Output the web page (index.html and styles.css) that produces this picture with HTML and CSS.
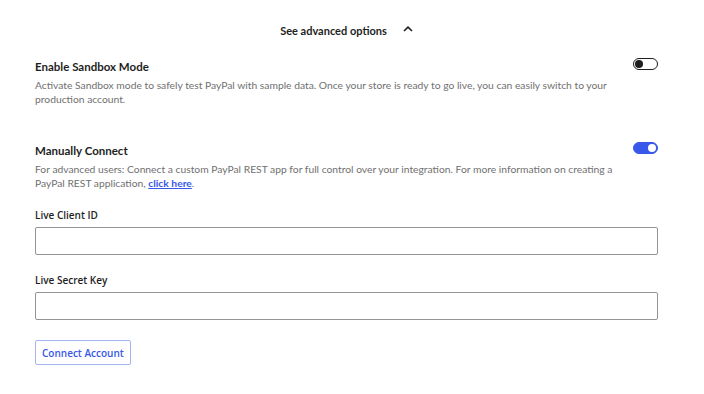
FILE: index.html
```html
<!DOCTYPE html>
<html lang="en">
<head>
    <meta charset="UTF-8">
    <meta name="viewport" content="width=device-width, initial-scale=1.0">
    <title>PayPal Advanced Options</title>
    <link rel="stylesheet" href="styles.css">
</head>
<body>
    <div class="panel">
        <div class="advanced-toggle">
            <span>See advanced options</span>
            <svg class="chevron" width="10" height="6" viewBox="0 0 10 6">
                <path d="M1 5 L5 1.2 L9 5" fill="none" stroke="#1e1e1e" stroke-width="1.6"/>
            </svg>
        </div>

        <div class="option">
            <div class="option-text">
                <h3>Enable Sandbox Mode</h3>
                <p>Activate Sandbox mode to safely test PayPal with sample data. Once your store is ready to go live, you can easily switch to your production account.</p>
            </div>
            <span class="switch"></span>
        </div>

        <div class="option manual">
            <div class="option-text">
                <h3>Manually Connect</h3>
                <p>For advanced users: Connect a custom PayPal REST app for full control over your integration. For more information on creating a PayPal REST application, <a href="#">click here</a>.</p>
            </div>
            <span class="switch on"></span>
        </div>

        <label class="field">
            <span>Live Client ID</span>
            <input type="text">
        </label>

        <label class="field">
            <span>Live Secret Key</span>
            <input type="password">
        </label>

        <button class="connect">Connect Account</button>
    </div>
</body>
</html>
```

FILE: styles.css
```css
body {
    margin: 0;
    background: #fff;
    color: #1e1e1e;
    font-family: 'Lato', sans-serif;
}

.panel {
    padding: 20px 46px 0 35px;
}

.advanced-toggle {
    display: flex;
    justify-content: center;
    align-items: center;
    gap: 16px;
    font-size: 11px;
    font-weight: bold;
    height: 20px;
}

.chevron {
    margin-top: -2px;
}

.option {
    display: flex;
    justify-content: space-between;
    align-items: flex-start;
    margin-top: 20px;
}

.option.manual {
    margin-top: 38px;
}

.option-text {
    max-width: 590px;
}

.option h3 {
    margin: 0 0 4px;
    font-size: 11.5px;
    font-weight: bold;
    color: #1e1e1e;
    line-height: 14px;
}

.option p {
    margin: 0;
    font-size: 10.3px;
    line-height: 14px;
    color: #707070;
}

.option a {
    color: #3858e9;
    font-weight: bold;
}

.switch {
    position: relative;
    flex: none;
    width: 23px;
    height: 10px;
    margin-top: -2px;
    border: 1px solid #1e1e1e;
    border-radius: 6px;
    background: #fff;
}

.switch::after {
    content: "";
    position: absolute;
    top: 1px;
    left: 1px;
    width: 8px;
    height: 8px;
    border-radius: 50%;
    background: #1e1e1e;
}

.switch.on {
    border-color: #3858e9;
    background: #3858e9;
}

.switch.on::after {
    left: auto;
    right: 1px;
    background: #fff;
}

.field {
    display: block;
    margin-top: 18px;
}

.field span {
    display: block;
    font-family: 'Open Sans', sans-serif;
    font-size: 10px;
    font-weight: 600;
    color: #1e1e1e;
    margin-bottom: 5px;
}

.field input {
    display: block;
    box-sizing: border-box;
    width: 100%;
    height: 28px;
    border: 1px solid #949494;
    border-radius: 2px;
    margin: 0;
}

.connect {
    margin-top: 20px;
    padding: 0 6px;
    height: 25px;
    font-family: 'Open Sans', sans-serif;
    font-size: 10px;
    font-weight: 600;
    color: #3858e9;
    background: #fff;
    border: 1px solid #a4b4f2;
    border-radius: 2px;
}
```
